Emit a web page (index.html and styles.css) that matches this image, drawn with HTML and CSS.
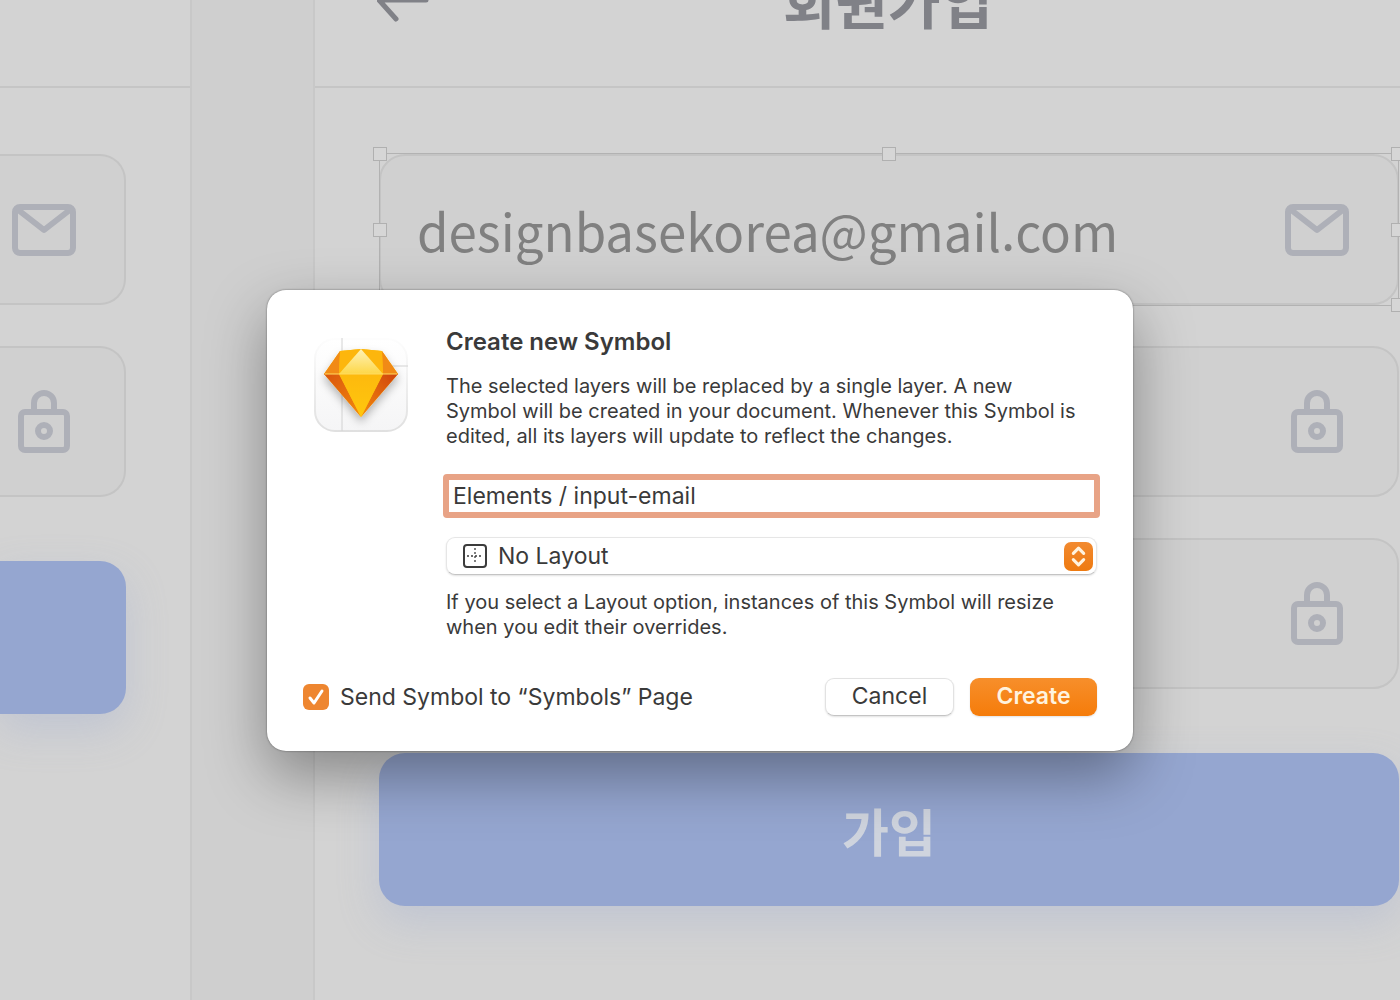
FILE: index.html
```html
<!DOCTYPE html>
<html lang="en">
<head>
<meta charset="utf-8">
<meta name="viewport" content="width=device-width, initial-scale=1">
<title>Create new Symbol</title>
<link rel="stylesheet" href="styles.css">
</head>
<body>
<svg class="defs" aria-hidden="true">
  <symbol id="mail" viewBox="0 0 72 72" fill="none" stroke="currentColor" stroke-width="6" stroke-linejoin="round">
    <rect x="7" y="13" width="58" height="46" rx="5"/>
    <path d="M9 15l27 21 27-21"/>
  </symbol>
  <symbol id="lock" viewBox="0 0 72 72" fill="none" stroke="currentColor" stroke-width="6">
    <rect x="13" y="26" width="46" height="38" rx="4"/>
    <path d="M26 26v-9a10 10 0 0 1 20 0v9"/>
    <circle cx="36" cy="45" r="6"/>
  </symbol>
</svg>

<main class="canvas">
  <section class="artboard artboard-left" aria-label="Login">
    <div class="topbar"></div>
    <div class="form">
      <div class="field"><svg class="field-icon"><use href="#mail"/></svg></div>
      <div class="field"><svg class="field-icon"><use href="#lock"/></svg></div>
      <button class="submit" type="button" aria-label="Login"></button>
    </div>
  </section>

  <section class="artboard artboard-right" lang="ko">
    <header class="topbar">
      <svg class="back" viewBox="0 0 56 56" fill="none" stroke="currentColor" stroke-width="5" stroke-linecap="round" stroke-linejoin="round"><path d="M49 29H2M19 48L2 29L19 10"/></svg>
      <h1 class="topbar-title">회원가입</h1>
    </header>
    <div class="form">
      <div class="field">
        <input class="field-input" type="email" aria-label="Email" value="designbasekorea@gmail.com">
        <svg class="field-icon"><use href="#mail"/></svg>
        <div class="selection">
          <i class="handle top left"></i><i class="handle top center"></i><i class="handle top right"></i>
          <i class="handle middle left"></i><i class="handle middle right"></i>
          <i class="handle bottom left"></i><i class="handle bottom center"></i><i class="handle bottom right"></i>
        </div>
      </div>
      <div class="field"><svg class="field-icon"><use href="#lock"/></svg></div>
      <div class="field"><svg class="field-icon"><use href="#lock"/></svg></div>
      <button class="submit" type="button">가입</button>
    </div>
  </section>
</main>

<div class="overlay">
  <form class="dialog" role="dialog" aria-labelledby="dialog-title">
    <div class="dialog-body">
      <svg class="app-icon" viewBox="0 0 94 94" aria-hidden="true">
        <defs>
          <linearGradient id="tile" x1="0" y1="0" x2="0" y2="1"><stop offset="0" stop-color="#ffffff"/><stop offset="1" stop-color="#f5f5f6"/></linearGradient>
          <linearGradient id="tile-edge" x1="0" y1="0" x2="0" y2="1"><stop offset="0" stop-color="#fdfdfd"/><stop offset="1" stop-color="#e0e0e0"/></linearGradient>
          <linearGradient id="side-left" x1="0" y1="0" x2="1" y2="1"><stop offset="0" stop-color="#d9530b"/><stop offset="1" stop-color="#f38a10"/></linearGradient>
          <linearGradient id="side-right" x1="1" y1="0" x2="0" y2="1"><stop offset="0" stop-color="#cf4208"/><stop offset="1" stop-color="#f38a10"/></linearGradient>
          <linearGradient id="front" x1="0" y1="0" x2="0" y2="1"><stop offset="0" stop-color="#fdb90c"/><stop offset="1" stop-color="#ffc70d"/></linearGradient>
          <linearGradient id="crown" x1="0" y1="0" x2="0" y2="1"><stop offset="0" stop-color="#fff2b8"/><stop offset="1" stop-color="#fdd748"/></linearGradient>
          <filter id="gem-shadow" x="-30%" y="-30%" width="160%" height="170%"><feDropShadow dx="0" dy="5" stdDeviation="4" flood-color="#000" flood-opacity=".28"/></filter>
        </defs>
        <rect x="1" y="1" width="92" height="92" rx="20" fill="url(#tile)" stroke="url(#tile-edge)" stroke-width="2"/>
        <path d="M28 0V93M60 28H94" stroke="#d2d2d2"/>
        <g filter="url(#gem-shadow)">
          <path d="M10 36L26 13L47 11L68 13L84 36L47 79Z" fill="#fdb90c"/>
          <path d="M10 36L26 13L25 36Z" fill="#f18a12"/>
          <path d="M84 36L68 13L69 36Z" fill="#f18a12"/>
          <path d="M10 36H25L47 79Z" fill="url(#side-left)"/>
          <path d="M84 36H69L47 79Z" fill="url(#side-right)"/>
          <path d="M25 36H69L47 79Z" fill="url(#front)"/>
          <path d="M26 13L47 11L25 36Z" fill="#fdb60a"/>
          <path d="M68 13L47 11L69 36Z" fill="#fdb60a"/>
          <path d="M25 36L47 11L69 36Z" fill="url(#crown)"/>
          <path d="M11 36H83" stroke="#ffdc63"/>
        </g>
      </svg>

      <div class="dialog-content">
        <h2 class="dialog-title" id="dialog-title">Create new Symbol</h2>
        <p class="note">The selected layers will be replaced by a single layer. A new<br>Symbol will be created in your document. Whenever this Symbol is<br>edited, all its layers will update to reflect the changes.</p>
        <input class="name-input" type="text" aria-label="Symbol name" value="Elements / input-email">
        <div class="select-box">
          <select class="select" aria-label="Layout" aria-describedby="layout-note"><option>No Layout</option></select>
          <svg class="layout-icon" viewBox="0 0 24 24" fill="none" stroke="#3c3c3c"><rect x="1" y="1" width="22" height="22" rx="3" stroke-width="2"/><path d="M12 4v16M4 12h16" stroke-dasharray="2 2" stroke-width="1.3"/></svg>
          <svg class="stepper" viewBox="0 0 28 28" fill="none" stroke="#fff3df" stroke-width="3" stroke-linecap="round" stroke-linejoin="round"><path d="M9 11L14 6L19 11M9 17L14 22L19 17"/></svg>
        </div>
        <p class="note" id="layout-note">If you select a Layout option, instances of this Symbol will resize<br>when you edit their overrides.</p>
      </div>
    </div>

    <div class="dialog-footer">
      <label class="check"><span class="check-box"><input class="check-input" type="checkbox" checked><svg class="check-mark" viewBox="0 0 26 26" fill="none" stroke="#fff" stroke-width="3" stroke-linecap="round" stroke-linejoin="round"><path d="M7 14L11 19L19 7"/></svg></span>Send Symbol to “Symbols” Page</label>
      <button class="btn" type="button">Cancel</button>
      <button class="btn btn-primary" type="button">Create</button>
    </div>
  </form>
</div>
</body>
</html>
```
FILE: styles.css
```css
* {
  box-sizing: border-box;
}

body {
  margin: 0;
  min-height: 100vh;
  overflow: hidden;
  background: #cfcfcf;
  color: #3a3a3a;
  font-family: Inter, "Liberation Sans", sans-serif;
}

h1, h2, p {
  margin: 0;
}

button, input, select {
  font: inherit;
  color: inherit;
}

.defs {
  position: absolute;
  width: 0;
  height: 0;
}

/* Canvas with the two artboards */
.canvas {
  display: flex;
  gap: 121px;
  height: 100vh;
  overflow: hidden;
}

.artboard {
  min-width: 0;
  background: #d3d3d3;
  font-family: "Noto Sans CJK KR", sans-serif;
}

.artboard-left {
  flex: 0 0 192px;
  border-right: 2px solid #c8c8c8;
}

.artboard-right {
  flex: 1;
  border-left: 2px solid #c8c8c8;
}

.topbar {
  display: grid;
  grid-template-columns: 56px 1fr 56px;
  align-items: center;
  height: 176px;
  margin-top: -88px;
  padding: 0 1px 0 62px;
  border-bottom: 2px solid #c5c5c5;
  color: #808187;
}

.artboard-left .topbar {
  display: block;
  padding: 0;
}

.back {
  width: 56px;
  height: 56px;
}

.topbar-title {
  font-size: 57px;
  line-height: 80px;
  font-weight: 700;
  text-align: center;
}

.form {
  display: flex;
  flex-direction: column;
  gap: 41px;
  padding: 66px 1px 0 64px;
}

.field {
  position: relative;
  display: flex;
  align-items: center;
  justify-content: flex-end;
  height: 151px;
  padding: 0 44px 0 36px;
  border: 2px solid #c4c4c4;
  border-radius: 26px;
  background: #d0d0d0;
}

.field-input {
  flex: 1;
  min-width: 0;
  padding: 0;
  border: 0;
  outline: 0;
  background: none;
  color: #808080;
  font-size: 51px;
  line-height: 80px;
}

.field-icon {
  flex: none;
  width: 72px;
  height: 72px;
  color: #aeb0b8;
}

.submit {
  height: 153px;
  margin-top: 23px;
  padding: 0;
  border: 0;
  border-radius: 26px;
  background: #95a6d0;
  box-shadow: 0 16px 40px rgba(149, 166, 208, 0.3);
  color: #cfd4de;
  font-size: 51px;
  font-weight: 700;
}

.artboard-left .form {
  padding-left: 0;
  padding-right: 64px;
}

.artboard-left .field {
  padding-left: 0;
  border-left: 0;
  border-radius: 0 26px 26px 0;
}

.artboard-left .submit {
  border-radius: 0 26px 26px 0;
}

/* Selection frame around the email field */
.selection {
  position: absolute;
  inset: -3px -2px;
  border: 1px solid #b2b2b2;
}

.handle {
  position: absolute;
  width: 14px;
  height: 14px;
  margin: -7px;
  border: 1px solid #b0b0b0;
  background: #d6d6d6;
}

.top { top: 0; }
.middle { top: 50%; }
.bottom { top: 100%; }
.left { left: 0; }
.center { left: 50%; }
.right { left: 100%; }

/* Dialog */
.overlay {
  position: absolute;
  inset: 0;
  display: flex;
  align-items: center;
  justify-content: center;
  padding-top: 41px;
}

.dialog {
  width: 866px;
  max-width: 100%;
  padding: 37px 36px 35px;
  border-radius: 19px;
  background: #fff;
  box-shadow: 0 0 2px rgba(0, 0, 0, 0.5), 0 24px 60px rgba(0, 0, 0, 0.36);
}

.dialog-body {
  display: flex;
  align-items: flex-start;
  gap: 38px;
  padding-left: 11px;
}

.app-icon {
  flex: none;
  width: 94px;
  height: 94px;
  margin-top: 11px;
}

.dialog-content {
  flex: 1;
  min-width: 0;
}

.dialog-title {
  margin-bottom: 17px;
  font-size: 24px;
  line-height: 30px;
  font-weight: 600;
}

.note {
  font-size: 20px;
  line-height: 25px;
  white-space: nowrap;
}

.name-input {
  display: block;
  width: calc(100% + 6px);
  height: 44px;
  margin: 25px -3px 19px;
  padding: 0 4px;
  border: 6px solid #e8a386;
  border-radius: 4px;
  outline: 0;
  background: #fff;
  font-size: 23px;
}

.select-box {
  position: relative;
  height: 38px;
  margin-bottom: 15px;
}

.select {
  appearance: none;
  width: 100%;
  height: 100%;
  padding: 0 51px;
  border: 1px solid #e6e6e6;
  border-bottom-color: #c4c4c4;
  border-radius: 9px;
  background: #fff;
  box-shadow: 0 1px 2px rgba(0, 0, 0, 0.12);
  font-size: 23px;
}

.layout-icon {
  position: absolute;
  top: 7px;
  left: 17px;
  width: 24px;
  height: 24px;
  pointer-events: none;
}

.stepper {
  position: absolute;
  top: 5px;
  right: 4px;
  width: 29px;
  height: 29px;
  border-radius: 7px;
  background: linear-gradient(#f28a30, #ee7a10);
  pointer-events: none;
}

.dialog-footer {
  display: flex;
  align-items: center;
  gap: 16px;
  margin-top: 38px;
}

.check {
  display: flex;
  align-items: center;
  gap: 11px;
  margin-right: auto;
  font-size: 23px;
}

.check-box {
  position: relative;
  width: 26px;
  height: 26px;
}

.check-input {
  appearance: none;
  display: block;
  width: 26px;
  height: 26px;
  margin: 0;
  border-radius: 6px;
  background: #ee8630;
}

.check-mark {
  position: absolute;
  inset: 0;
  pointer-events: none;
}

.btn {
  width: 129px;
  height: 38px;
  padding: 0 0 2px;
  border: 1px solid #e2e2e2;
  border-bottom-color: #c4c4c4;
  border-radius: 9px;
  background: #fff;
  box-shadow: 0 1px 2px rgba(0, 0, 0, 0.12);
  font-size: 23px;
}

.btn-primary {
  width: 127px;
  border: 0;
  background: linear-gradient(#f78f2b, #f57c0a);
  color: #fff3df;
  font-weight: 600;
}
```
